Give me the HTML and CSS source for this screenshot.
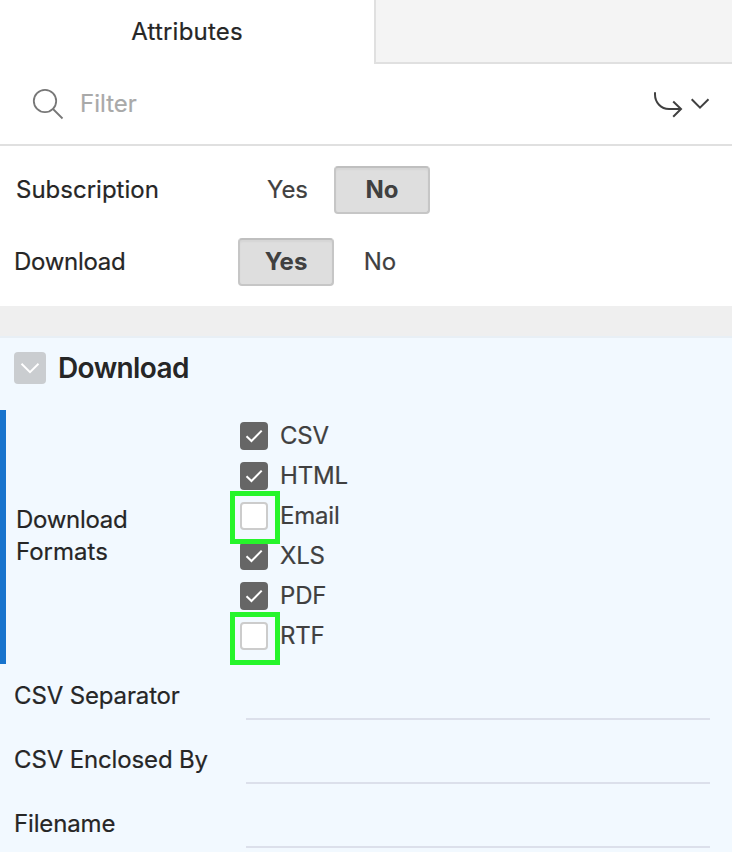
FILE: index.html
```html
<!DOCTYPE html>
<html lang="en">
<head>
<meta charset="utf-8">
<title>Attributes</title>
<link rel="stylesheet" href="styles.css">
</head>
<body>
<main class="panel">
  <header class="tabs">
    <div class="tab">Attributes</div>
    <div class="tab-rest"></div>
  </header>
  <div class="toolbar">
    <svg class="search" width="32" height="32" viewBox="0 0 32 32"><circle cx="13" cy="13" r="11.2"/><path d="M21 21l9.5 9.5"/></svg>
    <span class="filter">Filter</span>
    <svg class="menu" width="60" height="32" viewBox="0 0 60 32"><path d="M3 4.3v2.2C3 14.5 9 21 17 21h12M21.2 13.5l7.8 7.5-7.8 7.8"/><path d="M39.7 11.3l8.3 8.4 8.5-8.4"/></svg>
  </div>
  <section class="settings">
    <div class="row">
      <span class="label indent">Subscription</span>
      <div class="switch"><span class="option yes">Yes</span><span class="option selected">No</span></div>
    </div>
    <div class="row">
      <span class="label tight">Download</span>
      <div class="switch"><span class="option selected">Yes</span><span class="option no">No</span></div>
    </div>
  </section>
  <section class="download">
    <div class="heading">
      <span class="toggle"><svg width="32" height="32" viewBox="0 0 32 32"><path d="M7.5 11.8l8.5 8.4 8.5-8.4"/></svg></span>
      <h2>Download</h2>
    </div>
    <div class="formats">
      <div class="label formats-label"><span class="tight">Download</span><br>Formats</div>
      <ul class="checks">
        <li><span class="box checked"><svg width="28" height="28" viewBox="0 0 28 28"><path d="M6.5 14.2l5 4.8 10.2-10.4"/></svg></span>CSV</li>
        <li><span class="box checked"><svg width="28" height="28" viewBox="0 0 28 28"><path d="M6.5 14.2l5 4.8 10.2-10.4"/></svg></span>HTML</li>
        <li><span class="box"><i class="mark"></i></span>Email</li>
        <li><span class="box checked"><svg width="28" height="28" viewBox="0 0 28 28"><path d="M6.5 14.2l5 4.8 10.2-10.4"/></svg></span>XLS</li>
        <li><span class="box checked"><svg width="28" height="28" viewBox="0 0 28 28"><path d="M6.5 14.2l5 4.8 10.2-10.4"/></svg></span>PDF</li>
        <li><span class="box"><i class="mark low"></i></span>RTF</li>
      </ul>
    </div>
    <div class="field"><span class="label">CSV Separator</span><span class="input"></span></div>
    <div class="field"><span class="label">CSV Enclosed By</span><span class="input"></span></div>
    <div class="field"><span class="label">Filename</span><span class="input"></span></div>
  </section>
</main>
</body>
</html>
```
FILE: styles.css
```css
* { box-sizing: border-box; }
body {
  margin: 0;
  background: #fff;
  color: #262626;
  font: 400 24px/32px Inter, "Liberation Sans", sans-serif;
  letter-spacing: -0.1px;
  -webkit-text-stroke: 0.2px;
  overflow: hidden;
}
.panel { width: 732px; height: 852px; overflow: hidden; }
svg { display: block; fill: none; flex: none; }
.tabs { display: flex; height: 64px; }
.tab { width: 374px; display: flex; align-items: center; justify-content: center; letter-spacing: 0.2px; }
.tab-rest { flex: 1; background: #f4f4f4; border-left: 2px solid #e0e0e0; border-bottom: 2px solid #e0e0e0; }
.toolbar { height: 82px; display: flex; align-items: center; padding: 0 20px 0 32px; border-bottom: 2px solid #e0e0e0; }
.search { stroke: #777; stroke-width: 1.8; }
.filter { margin-left: 16px; color: #a9a9a9; flex: 1; letter-spacing: 0; }
.menu { stroke: #404040; stroke-width: 2; }
.settings { height: 160px; padding-top: 8px; }
.row { height: 72px; display: flex; align-items: center; }
.label { width: 224px; margin-left: 14px; flex: none; white-space: nowrap; }
.indent { padding-left: 2px; letter-spacing: 0; }
.tight { letter-spacing: -0.28px; }
.switch { display: flex; color: #404040; }
.option { width: 96px; height: 48px; display: flex; align-items: center; justify-content: center; }
.yes { padding-left: 3px; }
.no { padding-right: 4px; }
.selected { background: #dedede; border: 2px solid #c6c6c6; border-top-color: #bfbfbf; border-radius: 4px; box-shadow: inset 0 2px 2px rgba(0, 0, 0, .04); font-weight: 700; letter-spacing: 0; -webkit-text-stroke: 0; }
.download { border-top: 30px solid #efefef; background: #f2f9ff; height: 546px; }
.heading { height: 74px; padding: 0 0 12px 14px; border-top: 2px solid #e8eff5; display: flex; align-items: center; gap: 12px; }
.toggle { width: 32px; height: 32px; border-radius: 4px; background: #cacdd0; }
.toggle svg { stroke: #fff; stroke-width: 1.9; }
h2 { margin: 0; font-size: 28px; font-weight: 600; letter-spacing: -0.6px; -webkit-text-stroke: 0; }
.formats { height: 254px; border-left: 6px solid #1874cd; display: flex; align-items: center; }
.formats-label { margin-left: 10px; width: 224px; padding-bottom: 2px; letter-spacing: 0; }
.formats-label .tight { letter-spacing: -0.28px; }
.checks { list-style: none; margin: 0; padding: 0 0 2px; color: #404040; letter-spacing: -0.2px; }
.checks li { height: 40px; display: flex; align-items: center; gap: 12px; }
.box { position: relative; width: 28px; height: 28px; border-radius: 4px; background: #fff; border: 2px solid #ccc; }
.checked { border: 0; background: #666; }
.checked svg { stroke: #fff; stroke-width: 2; }
.mark { position: absolute; z-index: 1; left: -12px; top: -13px; width: 50px; height: 53px; border: 5px solid #26f52b; }
.low { top: -12px; }
.field { height: 64px; display: flex; align-items: center; letter-spacing: -0.14px; }
.input { margin-left: 8px; width: 464px; height: 56px; align-self: flex-start; border-bottom: 2px solid #dce0eb; }
```
